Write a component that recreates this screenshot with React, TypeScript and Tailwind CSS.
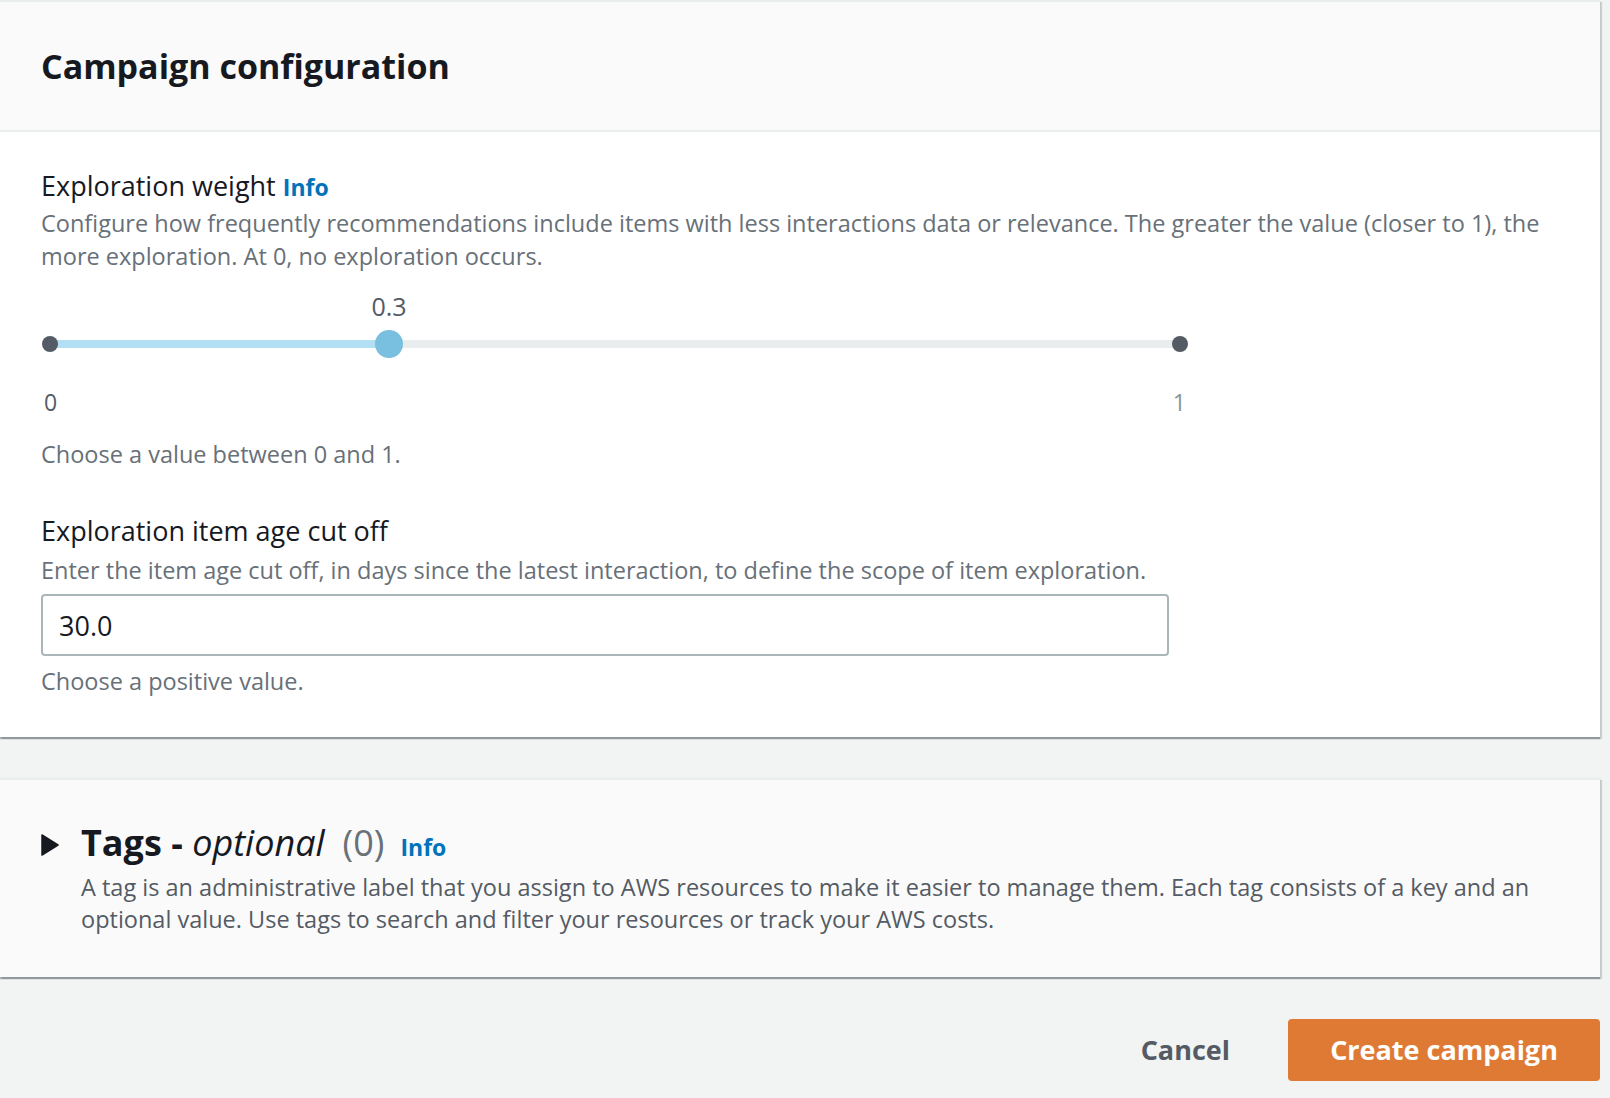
import React from "react";

const font = "font-['Open_Sans','Noto_Sans',sans-serif]";

const InfoLink: React.FC<{ className?: string }> = ({ className = "" }) => (
    <a className={`font-bold text-[#0073bb] ${className}`}>Info</a>
);

const ExplorationSlider: React.FC<{ value: number }> = ({ value }) => {
    const pct = value * 100;
    return (
        <div className="ml-[1px] w-[1146px]">
            <div className="relative h-[68px]">
                <span
                    className="absolute top-0 -translate-x-1/2 text-[25px] leading-[30px] text-[#545b64]"
                    style={{ left: `calc(8px + (100% - 16px) * ${value})` }}
                >
                    {value}
                </span>
                <div className="absolute left-[8px] right-[8px] top-[49px] h-[8px] bg-[#eaeded]">
                    <div
                        className="h-full bg-[#b3dff5]"
                        style={{ width: `${pct}%` }}
                    />
                </div>
                <div className="absolute left-0 top-[45px] h-[16px] w-[16px] rounded-full bg-[#545b64]" />
                <div className="absolute right-0 top-[45px] h-[16px] w-[16px] rounded-full bg-[#545b64]" />
                <div
                    className="absolute top-[39px] h-[28px] w-[28px] -translate-x-1/2 rounded-full bg-[#79bfdf]"
                    style={{ left: `calc(8px + (100% - 16px) * ${value})` }}
                />
            </div>
            <div className="mt-[28px] flex justify-between px-[2px] text-[23px] leading-[30px]">
                <span className="text-[#545b64]">0</span>
                <span className="text-[#879596]">1</span>
            </div>
        </div>
    );
};

const App: React.FC = () => {
    return (
        <div className={`min-h-screen bg-[#f2f3f3] ${font} text-[#16191f]`}>
            <div className="pr-[10px]">
                <section className="border-t-2 border-[#eaeded] bg-white shadow-[0_2px_1px_0_rgba(0,28,36,0.3),2px_2px_1px_0_rgba(0,28,36,0.15)]">
                    <div className="flex h-[130px] items-center border-b-2 border-[#eaeded] bg-[#fafafa] px-[41px]">
                        <h2 className="text-[34px] font-bold leading-[40px]">
                            Campaign configuration
                        </h2>
                    </div>
                    <div className="px-[41px] pt-[37px] pb-[39px]">
                        <div className="text-[27px] leading-[33px]">
                            Exploration weight{" "}
                            <InfoLink className="text-[23px]" />
                        </div>
                        <p className="mt-[3px] text-[23.5px] leading-[33px] text-[#687078]">
                            Configure how frequently recommendations include
                            items with less interactions data or relevance.
                            The greater the value (closer to 1), the more
                            exploration. At 0, no exploration occurs.
                        </p>
                        <div className="mt-[18px]">
                            <ExplorationSlider value={0.3} />
                        </div>
                        <p className="mt-[21px] text-[23.5px] leading-[33px] text-[#687078]">
                            Choose a value between 0 and 1.
                        </p>
                        <div className="mt-[43px] text-[27px] leading-[33px]">
                            Exploration item age cut off
                        </div>
                        <p className="mt-[7px] text-[23.5px] leading-[33px] text-[#687078]">
                            Enter the item age cut off, in days since the
                            latest interaction, to define the scope of item
                            exploration.
                        </p>
                        <input
                            className="mt-[7px] block h-[62px] w-[1128px] rounded-[4px] border-2 border-[#aab7b8] px-[16px] text-[27px] text-[#16191f] outline-none"
                            defaultValue="30.0"
                        />
                        <p className="mt-[9px] text-[23.5px] leading-[33px] text-[#687078]">
                            Choose a positive value.
                        </p>
                    </div>
                </section>

                <section className="mt-[41px] border-t-2 border-[#eaeded] bg-[#fafafa] px-[41px] pt-[41px] pb-[42px] shadow-[0_2px_1px_0_rgba(0,28,36,0.3),2px_2px_1px_0_rgba(0,28,36,0.15)]">
                    <div className="flex items-center">
                        <svg
                            width="18"
                            height="22"
                            viewBox="0 0 18 22"
                            className="mr-[22px] shrink-0"
                        >
                            <path
                                d="M1 1 L17 11 L1 21 Z"
                                fill="#16191f"
                                stroke="#16191f"
                                strokeWidth="1.5"
                                strokeLinejoin="round"
                            />
                        </svg>
                        <h2 className="text-[36px] leading-[44px]">
                            <span className="font-bold">Tags - </span>
                            <i>optional</i>
                            <span className="ml-[18px] text-[#687078]">
                                (0)
                            </span>
                            <InfoLink className="ml-[16px] text-[23px]" />
                        </h2>
                    </div>
                    <p className="ml-[40px] mt-[2px] text-[23.5px] leading-[32px] text-[#545b64]">
                        A tag is an administrative label that you assign to AWS
                        resources to make it easier to manage them. Each tag
                        consists of a key and an optional value. Use tags to
                        search and filter your resources or track your AWS
                        costs.
                    </p>
                </section>
            </div>

            <div className="flex items-center justify-end gap-[58px] pr-[10px] pt-[42px] pb-[15px]">
                <button className="text-[27px] font-bold text-[#545b64]">
                    Cancel
                </button>
                <button className="h-[62px] w-[312px] rounded-[4px] bg-[#df7a34] text-[27px] font-bold text-white">
                    Create campaign
                </button>
            </div>
        </div>
    );
};

export default App;
